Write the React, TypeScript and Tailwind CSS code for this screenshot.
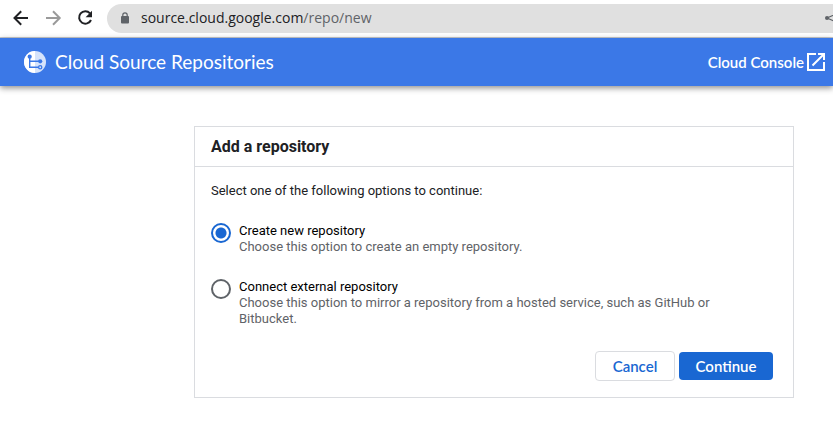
import { useState } from "react";

const options = [
  {
    id: "create",
    title: "Create new repository",
    text: "Choose this option to create an empty repository.",
  },
  {
    id: "connect",
    title: "Connect external repository",
    text: "Choose this option to mirror a repository from a hosted service, such as GitHub or Bitbucket.",
  },
];

function BrowserBar() {
  return (
    <div className="flex h-[38px] items-center border-b border-[#c8cacd] bg-white pb-px pl-[9px]">
      <button type="button" aria-label="Back" className="flex w-8 shrink-0 justify-start">
        <svg width="24" height="24" viewBox="0 0 24 24" fill="none" stroke="#202124" strokeWidth="2">
          <path d="M19 12H6M12.2 5.3 5.5 12l6.7 6.7" />
        </svg>
      </button>
      <button type="button" aria-label="Forward" className="flex w-8 shrink-0 justify-start">
        <svg width="24" height="24" viewBox="0 0 24 24" fill="none" stroke="#9a9a9a" strokeWidth="2">
          <path d="M5 12h13.5M12 5.3l6.7 6.7-6.7 6.7" />
        </svg>
      </button>
      <button type="button" aria-label="Reload" className="flex w-[34px] shrink-0 justify-start">
        <svg width="24" height="24" viewBox="0 0 24 24" fill="none">
          <path d="M17 7.4A6.2 6.2 0 1 0 18 14" stroke="#202124" strokeWidth="2" />
          <path d="M19 4.8v6.4h-6.4z" fill="#202124" />
        </svg>
      </button>
      <div className="flex h-[29px] min-w-0 flex-1 items-center overflow-hidden rounded-l-full bg-[#e0e0e0] pl-[13px]">
        <svg className="shrink-0" width="10" height="12" viewBox="0 0 10 12">
          <rect x="1" y="4" width="8" height="7.5" rx="1" fill="#5f6368" />
          <path d="M2.8 4.5V3a2.2 2.2 0 0 1 4.4 0v1.5" fill="none" stroke="#5f6368" strokeWidth="1.2" />
        </svg>
        <div className="ml-[11px] flex-1 whitespace-nowrap font-['Open_Sans',sans-serif] text-sm text-[#202124]">
          source.cloud.google.com<span className="text-[#5f6368]">/repo/new</span>
        </div>
        <svg className="-mr-[6px] shrink-0" width="14" height="14" viewBox="0 0 14 14">
          <path d="M12 2.5 2 7l10 4.5" fill="none" stroke="#5f6368" strokeWidth="1.2" />
          <circle cx="2" cy="7" r="2" fill="#5f6368" />
        </svg>
      </div>
    </div>
  );
}

function Header() {
  return (
    <header className="flex h-12 items-center bg-[#3b78e7] pl-6 pr-[5px] text-white shadow-[0_2px_6px_0_rgba(0,0,0,0.45)]">
      <svg className="shrink-0" width="22" height="22" viewBox="0 0 22 22">
        <circle cx="11" cy="11" r="11" fill="#d5e3fb" />
        <path d="M11 0a11 11 0 0 0 0 22z" fill="#fff" />
        <path d="M5.7 5.7v10.5h10.5M5.7 10.3h10.5" fill="none" stroke="#3b78e7" strokeWidth="1.4" />
        <circle cx="5.7" cy="5.7" r="2.1" fill="#3b78e7" />
        <circle cx="16.2" cy="10.3" r="2.1" fill="#3b78e7" />
        <circle cx="16.2" cy="16.2" r="1.6" fill="#d5e3fb" stroke="#3b78e7" strokeWidth="1.3" />
      </svg>
      <h1 className="ml-[9px] flex-1 pb-px font-[Lato,sans-serif] text-[19px] leading-6">Cloud Source Repositories</h1>
      <a href="#console" className="flex items-center font-[Lato,sans-serif] text-[15px] font-semibold">
        Cloud Console
        <svg width="24" height="24" viewBox="0 0 24 24" fill="currentColor">
          <path d="M19 19H5V5h7V3H3v18h18v-9h-2zM14 3v2h3.6L7.8 14.8l1.4 1.4L19 6.4V10h2V3z" />
        </svg>
      </a>
    </header>
  );
}

export default function App() {
  const [selected, setSelected] = useState("create");
  return (
    <div className="overflow-hidden bg-white font-[Roboto,sans-serif]">
      <BrowserBar />
      <Header />
      <main className="pb-[30px] pl-[194px] pr-[39px] pt-10">
        <form className="max-w-[600px] border border-[#dadce0]" onSubmit={(e) => e.preventDefault()}>
          <h2 className="h-10 border-b border-[#dadce0] px-4 text-base font-bold leading-10 text-[#202124]">
            Add a repository
          </h2>
          <div className="p-4 text-[13px] leading-4">
            <p className="text-[#202124]">Select one of the following options to continue:</p>
            <fieldset className="mt-6 flex flex-col gap-6 pr-8">
              {options.map((o) => (
                <label key={o.id} className="flex gap-2">
                  <input
                    type="radio"
                    name="repository"
                    checked={selected === o.id}
                    onChange={() => setSelected(o.id)}
                    className="size-5 shrink-0 appearance-none rounded-full border-2 border-[#5f6368] checked:border-[#1967d2] checked:bg-[radial-gradient(circle,#1967d2_5px,white_6px)]"
                  />
                  <span>
                    <span className="block text-black">{o.title}</span>
                    <span className="block text-[#5f6368]">{o.text}</span>
                  </span>
                </label>
              ))}
            </fieldset>
            <div className="mt-6 flex items-center justify-end gap-1 pr-1 font-[Lato,sans-serif] text-[15px] font-semibold">
              <button type="button" className="h-[30px] w-20 rounded border border-[#dadce0] text-[#1967d2]">
                Cancel
              </button>
              <button type="submit" className="h-7 w-[94px] rounded bg-[#1967d2] text-white">
                Continue
              </button>
            </div>
          </div>
        </form>
      </main>
    </div>
  );
}
